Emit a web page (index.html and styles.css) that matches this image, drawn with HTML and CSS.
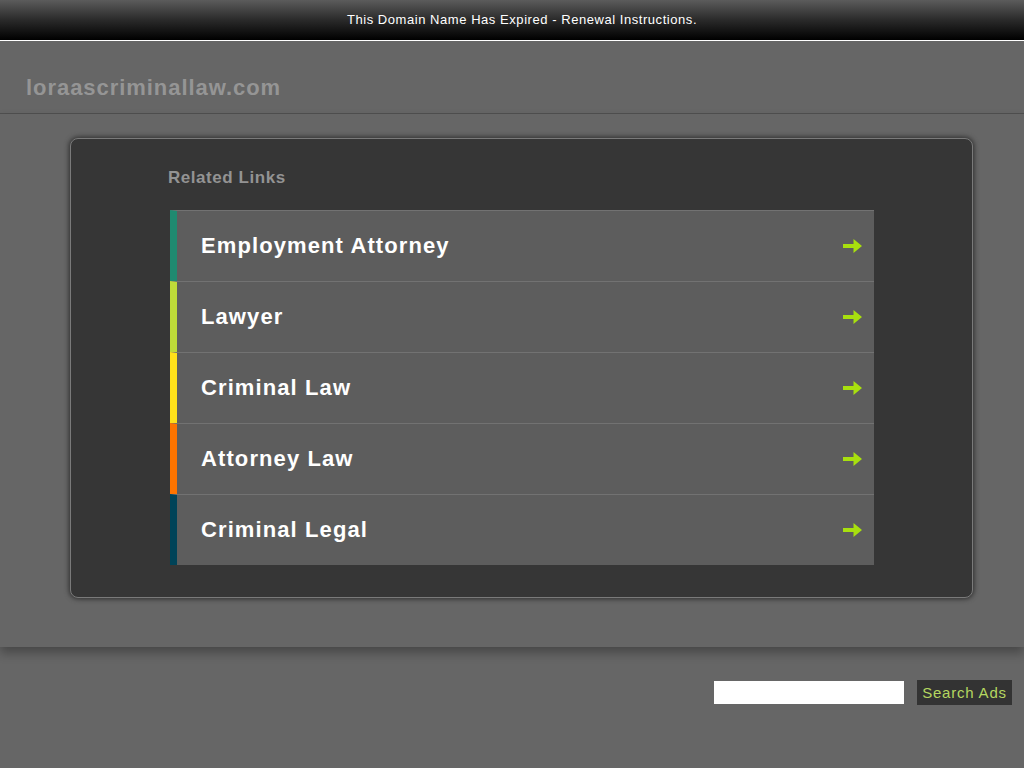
FILE: index.html
```html
<!DOCTYPE html>
<html>
<head>
<meta charset="utf-8">
<title>loraascriminallaw.com</title>
<link rel="stylesheet" href="styles.css">
</head>
<body>
<div class="topbar"><a href="#">This Domain Name Has Expired - Renewal Instructions.</a></div>
<div class="header"><h1 class="domain">loraascriminallaw.com</h1></div>
<div class="main">
  <div class="panel">
    <h2 class="related">Related Links</h2>
    <ul class="links">
      <li class="link c1"><span>Employment Attorney</span><svg class="arrow" viewBox="0 0 19 14"><path d="M0 5h10.5V0L19 7 10.5 14V9H0z"/></svg></li>
      <li class="link c2"><span>Lawyer</span><svg class="arrow" viewBox="0 0 19 14"><path d="M0 5h10.5V0L19 7 10.5 14V9H0z"/></svg></li>
      <li class="link c3"><span>Criminal Law</span><svg class="arrow" viewBox="0 0 19 14"><path d="M0 5h10.5V0L19 7 10.5 14V9H0z"/></svg></li>
      <li class="link c4"><span>Attorney Law</span><svg class="arrow" viewBox="0 0 19 14"><path d="M0 5h10.5V0L19 7 10.5 14V9H0z"/></svg></li>
      <li class="link c5"><span>Criminal Legal</span><svg class="arrow" viewBox="0 0 19 14"><path d="M0 5h10.5V0L19 7 10.5 14V9H0z"/></svg></li>
    </ul>
  </div>
</div>
<div class="footer">
  <input class="search" type="text">
  <button class="btn">Search Ads</button>
</div>
</body>
</html>
```
FILE: styles.css
```css
html, body {
  margin: 0;
  padding: 0;
  background: #666666;
  font-family: "Liberation Sans", Arial, sans-serif;
}
.topbar {
  height: 40px;
  background: linear-gradient(to bottom, #5c5c5c 0%, #2a2a2a 50%, #000000 100%);
  border-bottom: 1px solid #ffffff;
  text-align: center;
  line-height: 40px;
  font-size: 13px;
  letter-spacing: 0.55px;
  padding-left: 20px;
}
.topbar a {
  color: #ffffff;
  text-decoration: none;
}
.header {
  height: 72px;
  border-bottom: 1px solid #505050;
  display: flex;
  align-items: center;
  padding-left: 26px;
}
.domain {
  margin: 22px 0 0 0;
  font-size: 22px;
  font-weight: bold;
  color: #959595;
  letter-spacing: 0.95px;
}
.main {
  padding: 24px 0 49px 70px;
  box-shadow: 0 6px 10px rgba(0, 0, 0, 0.3);
  position: relative;
}
.panel {
  width: 901px;
  box-sizing: content-box;
  background: #363636;
  border: 1px solid #7a7a7a;
  border-radius: 8px;
  box-shadow: 0 0 5px 1px #2e2e2e;
  padding: 27px 0 32px 0;
}
.related {
  margin: 0 0 20px 97px;
  font-size: 17px;
  font-weight: bold;
  color: #939393;
  line-height: 24px;
  letter-spacing: 0.55px;
}
.links {
  list-style: none;
  margin: 0 0 0 99px;
  padding: 0;
  width: 704px;
}
.link {
  height: 70px;
  border-top: 1px solid #727272;
  border-left: 7px solid #1f8a70;
  background: #5d5d5d;
  display: flex;
  align-items: center;
  justify-content: space-between;
  padding: 0 12px 0 24px;
  color: #ffffff;
  font-size: 22px;
  font-weight: bold;
  letter-spacing: 1.1px;
}
.link span {
  margin-top: -1px;
}
.c1 { border-left-color: #1f8a70; }
.c2 { border-left-color: #bedb39; }
.c3 { border-left-color: #ffe11a; }
.c4 { border-left-color: #fd7400; }
.c5 { border-left-color: #004358; }
.arrow {
  width: 19px;
  height: 14px;
  fill: #a8e00e;
  margin-top: -1px;
}
.footer {
  display: flex;
  justify-content: flex-end;
  align-items: center;
  padding: 33px 12px 0 0;
  gap: 13px;
}
.search {
  width: 190px;
  height: 23px;
  border: 0;
  padding: 0;
  margin: 0;
  background: #ffffff;
}
.btn {
  height: 25px;
  width: 95px;
  border: 0;
  padding: 0;
  margin: 0;
  background: #333333;
  color: #b5d760;
  font-family: "Liberation Sans", Arial, sans-serif;
  font-size: 15px;
  letter-spacing: 0.8px;
}
```
